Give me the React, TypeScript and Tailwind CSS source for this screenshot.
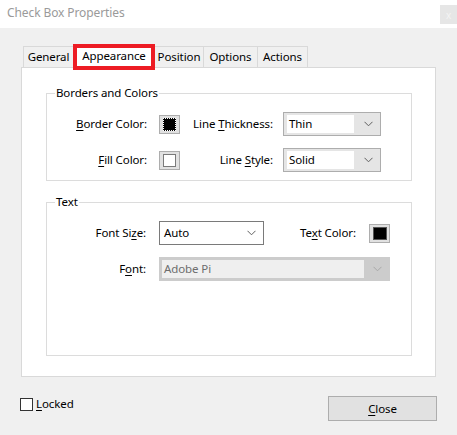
import React from "react";

const Chevron = ({ color = "#606060" }: { color?: string }) => (
  <svg width="9" height="6" viewBox="0 0 9 6" fill="none">
    <path d="M0.5 0.8 L4.5 4.8 L8.5 0.8" stroke={color} strokeWidth="1" />
  </svg>
);

const Swatch = ({ kind }: { kind: "focus" | "white" | "black" }) => (
  <div className="w-[21px] h-[19px] border border-[#adadad] bg-[#e1e1e1] flex items-center justify-center">
    {kind === "focus" && <div className="w-[13px] h-[13px] border border-dotted border-white bg-black" />}
    {kind === "white" && <div className="w-[13px] h-[13px] border border-[#7a7a7a] bg-white" />}
    {kind === "black" && <div className="w-[13px] h-[13px] border border-[#7a7a7a] bg-black" />}
  </div>
);

const Combo = ({ value }: { value: string }) => (
  <div className="w-[98px] h-[24px] border border-[#adadad] bg-[#e5e5e5] flex items-center pl-[3px] pr-[7px]">
    <div className="flex-1 h-[18px] bg-white flex items-center pl-[2px] mr-[10px]">{value}</div>
    <Chevron />
  </div>
);

export default function App() {
  return (
    <div
      className="w-[457px] h-[435px] bg-[#f0f0f0] overflow-hidden text-[11.5px] tracking-[-0.1px] text-black leading-[16px]"
      style={{ fontFamily: '"Segoe UI", "Noto Sans", sans-serif' }}
    >
      {/* title bar */}
      <div className="h-[28px] bg-white flex items-start justify-between">
        <div className="pl-[7px] pt-[5px] text-[#9a9a9a] text-[12px]">Check Box Properties</div>
        <div className="mt-[5px] w-[17px] h-[19px] bg-[#e6e6e6] text-[#f4f4f4] text-[10px] flex items-center justify-center">
          x
        </div>
      </div>

      <div className="pl-[21px] pt-[16px]">
        {/* tabs */}
        <div className="flex items-start h-[23px] ml-[2px]">
          <div className="mt-[2px] w-[50px] h-[21px] border-l border-t border-[#d9d9d9] flex items-center justify-center">
            General
          </div>
          <div className="relative z-10 w-[82px] h-[26px] border-[4px] border-[#ed1c24] bg-white flex items-start justify-center">
            Appearance
          </div>
          <div className="mt-[2px] w-[49px] h-[21px] border-t border-r border-[#d9d9d9] flex items-center justify-center">
            Position
          </div>
          <div className="mt-[2px] w-[54px] h-[21px] border-t border-r border-[#d9d9d9] flex items-center justify-center">
            Options
          </div>
          <div className="mt-[2px] w-[50px] h-[21px] border-t border-r border-[#d9d9d9] flex items-center justify-center">
            Actions
          </div>
        </div>

        {/* panel */}
        <div className="w-[415px] h-[310px] bg-white border border-[#d9d9d9] pl-[24px] pt-[17px]">
          <fieldset className="w-[366px] border border-[#dcdcdc] pl-0 pr-0 pb-[8px]">
            <legend className="ml-[8px] px-[1px] leading-[16px]">Borders and Colors</legend>
            <div className="mt-[11px] flex flex-col gap-[12px]">
              <div className="flex items-center h-[24px]">
                <div className="w-[100px] text-right">
                  <u className="underline-offset-2">B</u>order Color:
                </div>
                <div className="ml-[12px]">
                  <Swatch kind="focus" />
                </div>
                <div className="w-[93px] text-right">
                  Line <u className="underline-offset-2">T</u>hickness:
                </div>
                <div className="ml-[10px]">
                  <Combo value="Thin" />
                </div>
              </div>
              <div className="flex items-center h-[24px]">
                <div className="w-[100px] text-right">
                  <u className="underline-offset-2">F</u>ill Color:
                </div>
                <div className="ml-[12px]">
                  <Swatch kind="white" />
                </div>
                <div className="w-[93px] text-right">
                  Line <u className="underline-offset-2">S</u>tyle:
                </div>
                <div className="ml-[10px]">
                  <Combo value="Solid" />
                </div>
              </div>
            </div>
          </fieldset>

          <fieldset className="mt-[13px] w-[366px] h-[162px] border border-[#dcdcdc]">
            <legend className="ml-[8px] px-[1px] leading-[16px]">Text</legend>
            <div className="mt-[11px] flex flex-col gap-[12px]">
              <div className="flex items-center h-[24px]">
                <div className="w-[99px] text-right">
                  Font Si<u className="underline-offset-2">z</u>e:
                </div>
                <div className="ml-[13px] w-[105px] h-[24px] border border-[#7a7a7a] bg-white flex items-center justify-between pl-[4px] pr-[7px]">
                  <span>Auto</span>
                  <Chevron />
                </div>
                <div className="ml-[36px] w-[57px]">
                  Te<u className="underline-offset-2">x</u>t Color:
                </div>
                <div className="ml-[12px] w-[21px] h-[19px] border border-[#adadad] bg-[#e1e1e1] flex items-center justify-center">
                  <div className="w-[14px] h-[13px] bg-black border border-[#555]" />
                </div>
              </div>
              <div className="flex items-center h-[24px]">
                <div className="w-[99px] text-right">
                  F<u className="underline-offset-2">o</u>nt:
                </div>
                <div className="ml-[13px] w-[231px] h-[24px] border border-[#cccccc] bg-[#cccccc] flex items-center pl-[2px] pr-[7px] py-[2px]">
                  <div className="flex-1 h-full bg-[#efefef] flex items-center pl-[2px] text-[#6d6d6d] mr-[9px]">
                    Adobe Pi
                  </div>
                  <Chevron color="#a8a8a8" />
                </div>
              </div>
            </div>
          </fieldset>
        </div>
      </div>

      {/* footer */}
      <div className="flex items-start justify-between pl-[20px] pr-[20px] mt-[19px]">
        <div className="flex items-center">
          <div className="w-[13px] h-[13px] border border-[#333333] bg-white" />
          <span className="ml-[3px]">
            <u className="underline-offset-2">L</u>ocked
          </span>
        </div>
        <div className="w-[109px] h-[25px] border border-[#adadad] bg-[#e1e1e1] flex items-center justify-center">
          <span>
            <u className="underline-offset-2">C</u>lose
          </span>
        </div>
      </div>
    </div>
  );
}
